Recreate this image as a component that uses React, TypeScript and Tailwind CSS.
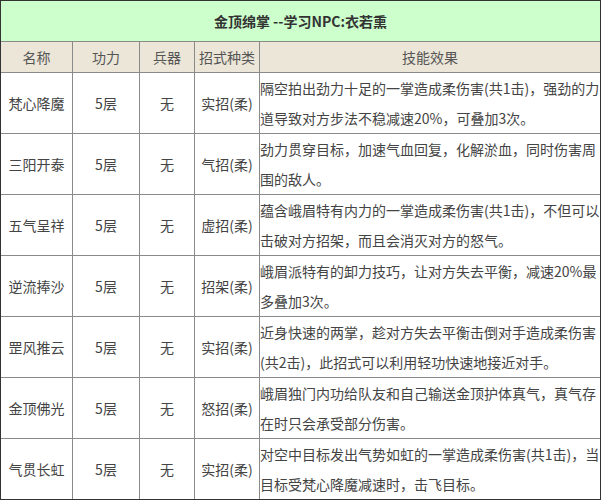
const rows = [
  {
    name: "梵心降魔",
    kind: "实招(柔)",
    lines: ["隔空拍出劲力十足的一掌造成柔伤害(共1击)，强劲的力", "道导致对方步法不稳减速20%，可叠加3次。"],
  },
  {
    name: "三阳开泰",
    kind: "气招(柔)",
    lines: ["劲力贯穿目标，加速气血回复，化解淤血，同时伤害周", "围的敌人。"],
  },
  {
    name: "五气呈祥",
    kind: "虚招(柔)",
    lines: ["蕴含峨眉特有内力的一掌造成柔伤害(共1击)，不但可以", "击破对方招架，而且会消灭对方的怒气。"],
  },
  {
    name: "逆流捧沙",
    kind: "招架(柔)",
    lines: ["峨眉派特有的卸力技巧，让对方失去平衡，减速20%最", "多叠加3次。"],
  },
  {
    name: "罡风推云",
    kind: "实招(柔)",
    lines: ["近身快速的两掌，趁对方失去平衡击倒对手造成柔伤害", "(共2击)，此招式可以利用轻功快速地接近对手。"],
  },
  {
    name: "金顶佛光",
    kind: "怒招(柔)",
    lines: ["峨眉独门内功给队友和自己输送金顶护体真气，真气存", "在时只会承受部分伤害。"],
  },
  {
    name: "气贯长虹",
    kind: "实招(柔)",
    lines: ["对空中目标发出气势如虹的一掌造成柔伤害(共1击)，当", "目标受梵心降魔减速时，击飞目标。"],
  },
];

const cols = "grid grid-cols-[71px_66px_54px_64px_340px] gap-x-px";

export default function App() {
  return (
    <div className="bg-white w-[602px] h-[501px] font-['Microsoft_YaHei','Noto_Sans_CJK_SC',sans-serif] text-[14px] text-[#333]">
      <div className="w-[601px] border border-[#333] bg-[#8a8a8a]">
        <div className="h-[40px] mb-px bg-[#ccffcc] flex items-center justify-center font-bold text-[#333]">
          金顶绵掌 --学习NPC:衣若熏
        </div>

        <div className={`${cols} mb-px h-[30px] text-[#555]`}>
          {["名称", "功力", "兵器", "招式种类", "技能效果"].map((h) => (
            <div key={h} className="bg-[#ebe6d8] flex items-center justify-center">
              {h}
            </div>
          ))}
        </div>

        <div className="grid gap-y-px">
          {rows.map((r) => (
            <div key={r.name} className={`${cols} h-[60px] text-[#444]`}>
              <div className="bg-white flex items-center justify-center">{r.name}</div>
              <div className="bg-white flex items-center justify-center">5层</div>
              <div className="bg-white flex items-center justify-center">无</div>
              <div className="bg-white flex items-center justify-center">{r.kind}</div>
              <div className="bg-white leading-[30px] whitespace-nowrap overflow-hidden">
                {r.lines.map((l) => (
                  <div key={l}>{l}</div>
                ))}
              </div>
            </div>
          ))}
        </div>
      </div>
    </div>
  );
}
